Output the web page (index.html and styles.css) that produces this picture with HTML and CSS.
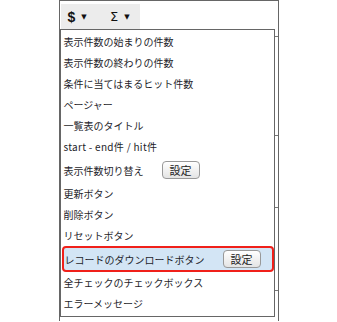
FILE: index.html
```html
<!DOCTYPE html>
<html lang="ja">
<head>
    <meta charset="UTF-8" />
    <meta name="viewport" content="width=device-width, initial-scale=1.0"/>
    <title>部品メニュー</title>
    <link rel="stylesheet" href="styles.css">
</head>
<body>

    <div class="frame">
        <div class="grid-row row-top">
            <div class="toolbar">
                <span class="tool tool-dollar">$ <span class="caret">▼</span></span>
                <span class="tool tool-sigma">Σ <span class="caret">▼</span></span>
            </div>
        </div>
        <div class="grid-row row-a"></div>
        <div class="grid-row row-b"></div>
        <div class="grid-row row-c"></div>
        <div class="grid-row row-d"></div>

        <ul class="menu">
            <li class="item">表示件数の始まりの件数</li>
            <li class="item">表示件数の終わりの件数</li>
            <li class="item">条件に当てはまるヒット件数</li>
            <li class="item">ページャー</li>
            <li class="item">一覧表のタイトル</li>
            <li class="item item-latin">start - end件 / hit件</li>
            <li class="item item-btn">表示件数切り替え <button class="set-btn">設定</button></li>
            <li class="item">更新ボタン</li>
            <li class="item">削除ボタン</li>
            <li class="item">リセットボタン</li>
            <li class="item item-btn selected">レコードのダウンロードボタン <button class="set-btn">設定</button></li>
            <li class="item">全チェックのチェックボックス</li>
            <li class="item">エラーメッセージ</li>
        </ul>
    </div>

</body>
</html>
```

FILE: styles.css
```css
body {
    font-family: "Noto Sans CJK JP", "Noto Sans", sans-serif;
    margin: 0;
    padding: 0;
    background-color: #fff;
    color: #1e1e2a;
}
.frame {
    position: relative;
    width: 218px;
    height: 320px;
    margin: 0 auto;
    border: 1px solid #666;
    border-bottom: none;
}
.grid-row {
    border-bottom: 1px solid #777;
}
.row-top {
    height: 32px;
}
.row-a {
    height: 98px;
}
.row-b {
    height: 71px;
}
.row-c {
    height: 82px;
}
.row-d {
    height: 32px;
}
.toolbar {
    display: flex;
    width: 79px;
    height: 25px;
    margin: 3px 0 0 1px;
    background-color: #ececec;
}
.tool {
    display: flex;
    align-items: center;
    width: 40px;
    padding-left: 7px;
    box-sizing: border-box;
    font-size: 14px;
    color: #111;
}
.tool-dollar {
    font-family: "Liberation Sans", sans-serif;
    font-weight: bold;
}
.tool-sigma {
    padding-left: 10px;
    font-family: "DejaVu Sans", sans-serif;
    font-size: 13px;
}
.caret {
    font-family: "DejaVu Sans", sans-serif;
    font-size: 7px;
    margin-left: 6px;
}

/* menu lies over the grid */
.menu {
    position: absolute;
    top: 28px;
    left: 0;
    width: 213px;
    height: 285px;
    margin: 0;
    padding: 1px 0 0;
    list-style: none;
    background: #fff;
    border: 1px solid #666;
}
.item {
    display: flex;
    align-items: center;
    height: 21px;
    padding-left: 3px;
    font-size: 10px;
    white-space: nowrap;
}
.item-latin {
    letter-spacing: 0.3px;
}
.item-btn {
    height: 26px;
}
.selected {
    margin: 0 0 0 1px;
    padding-left: 1px;
    height: 22px;
    background-color: #d3e5f5;
    border: 2px solid #f0201a;
    border-radius: 4px;
}
.set-btn {
    margin-left: 18px;
    width: 38px;
    height: 18px;
    padding: 0;
    font-family: "Noto Sans CJK JP", sans-serif;
    font-size: 11px;
    color: #222;
    background: linear-gradient(#ffffff, #e4e4e4);
    border: 1px solid #999;
    border-radius: 4px;
}
```
